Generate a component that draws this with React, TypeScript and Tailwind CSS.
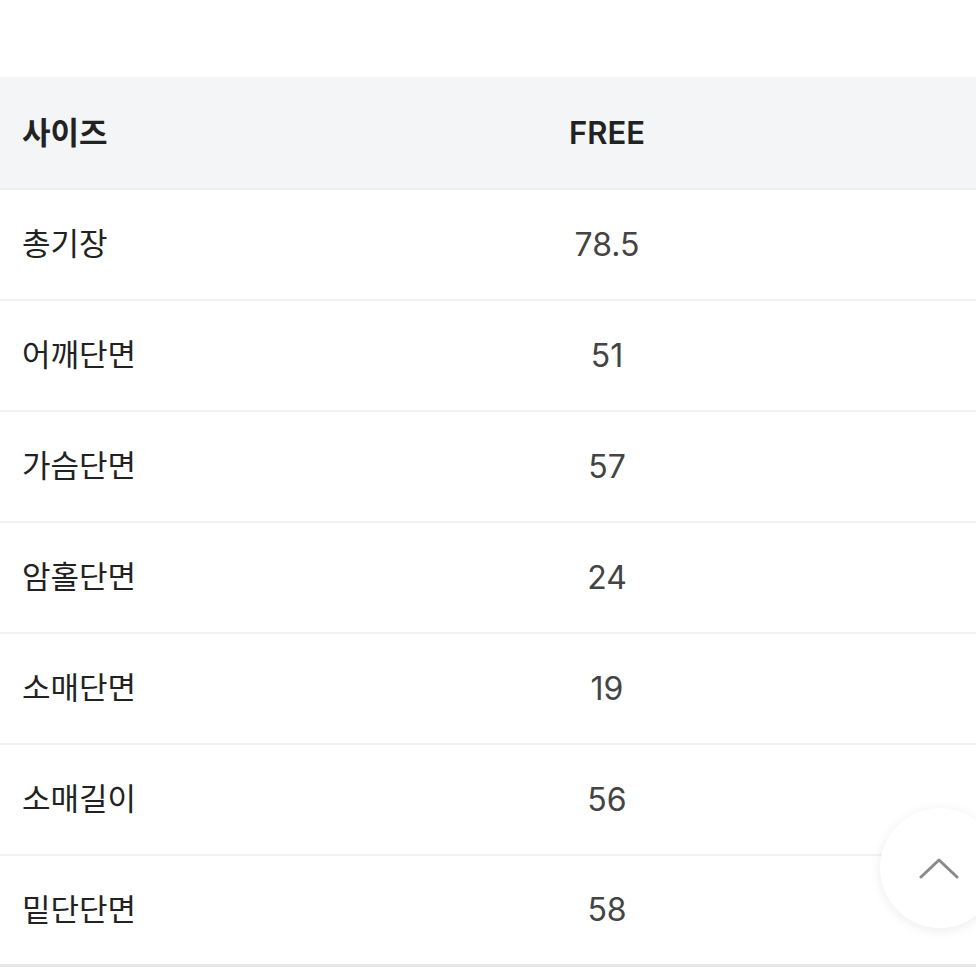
const rows: [string, string][] = [
  ['총기장', '78.5'],
  ['어깨단면', '51'],
  ['가슴단면', '57'],
  ['암홀단면', '24'],
  ['소매단면', '19'],
  ['소매길이', '56'],
  ['밑단단면', '58'],
]

export default function App() {
  return (
    <div
      className="relative w-[976px] h-[976px] bg-white overflow-hidden"
      style={{ fontFamily: 'Inter, "Noto Sans CJK KR", sans-serif' }}
    >
      <div className="h-[77px]" />
      <div className="grid grid-cols-[238px_1fr] h-[113px] pt-[2px] bg-[#f4f5f7] border-b-2 border-[#eeeff1] items-center text-[31px] font-semibold text-[#222]">
        <div className="pl-[22px]">사이즈</div>
        <div className="text-center">FREE</div>
      </div>
      {rows.map(([label, value], i) => (
        <div
          key={label}
          className={`grid grid-cols-[238px_1fr] h-[111px] items-center text-[31px] ${
            i === rows.length - 1 ? 'border-b-[3px] border-[#e6e6e6]' : 'border-b-2 border-[#f2f2f2]'
          }`}
        >
          <div className="pl-[22px] text-[#222]">{label}</div>
          <div className="text-center text-[#444] text-[32px]">{value}</div>
        </div>
      ))}

      <button className="absolute left-[880px] top-[808px] w-[120px] h-[120px] rounded-full bg-white shadow-[0_2px_12px_rgba(0,0,0,0.08)] flex items-center justify-center">
        <svg width="40" height="22" viewBox="0 0 40 22" className="-ml-[2px]">
          <path d="M2 20 L20 3 L38 20" fill="none" stroke="#8a8a8a" strokeWidth="3" strokeLinecap="round" strokeLinejoin="round" />
        </svg>
      </button>
    </div>
  )
}
